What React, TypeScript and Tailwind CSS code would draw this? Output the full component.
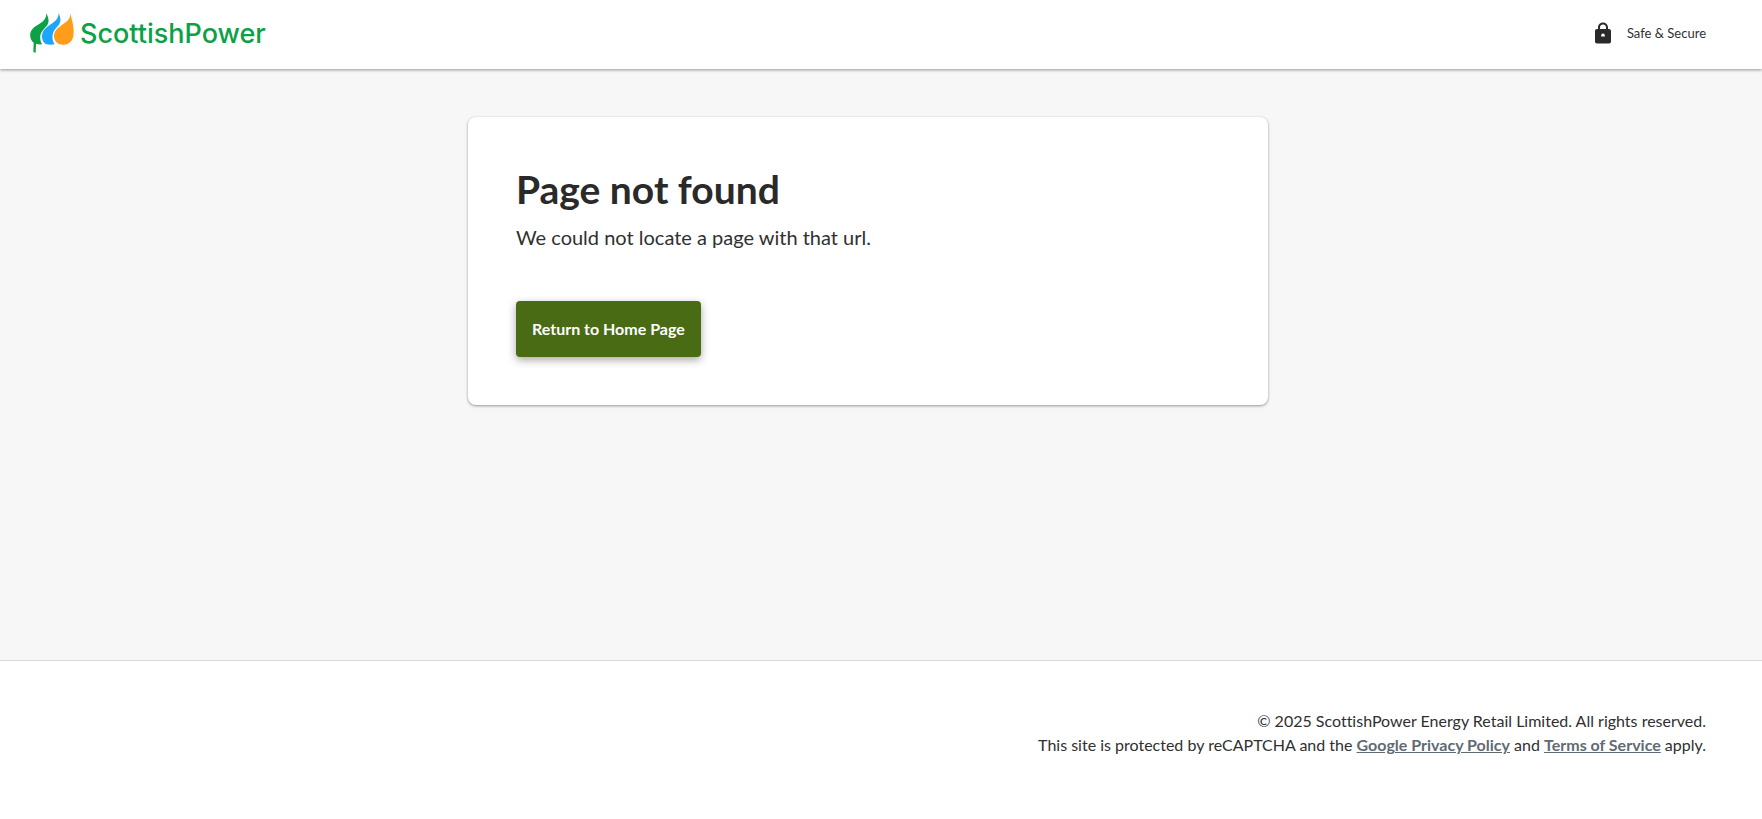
const homeUrl = '#';
const privacyUrl = 'https://policies.google.com/privacy';
const termsUrl = 'https://policies.google.com/terms';

function Logo() {
  return (
    <a href={homeUrl} className="flex items-center gap-1.5">
      <svg className="h-10 w-11" viewBox="30 40 132 120" aria-hidden="true">
        {/* Green leaf with its stem */}
        <path
          fill="#0ca047"
          d="M79 41C86 56 90 68 78 81C66 93 57 105 62 124C63 129 65 132 67 134C60 135 53 134 48 132L47 159L40 157L41 129C33 123 29 113 31 101C35 84 50 78 62 70C74 62 79 54 79 41Z"
        />
        {/* Blue drop */}
        <path
          fill="#1ba5fb"
          d="M116 41C123 56 124 68 113 80C102 91 94 105 99 124C101 129 103 132 104 134C96 136 87 136 80 134C69 130 64 116 67 102C71 87 84 80 97 71C110 62 116 53 116 41Z"
        />
        {/* Orange drop */}
        <path
          fill="#ff9c1a"
          d="M151 41C154 57 161 73 161 94C162 117 153 135 131 135C112 136 100 121 102 105C105 88 119 82 130 73C144 64 151 55 151 41Z"
        />
      </svg>
      <span className="pt-0.5 font-['Inter',sans-serif] text-[27px] leading-10 font-medium text-[#0ca047]">
        ScottishPower
      </span>
    </a>
  );
}

function LockIcon() {
  return (
    <svg className="h-6 w-6" viewBox="0 0 24 24" fill="#2a2a2a" aria-hidden="true">
      <path
        fillRule="evenodd"
        d="M18 8h-1V6.500C17 3.700 14.800 1.500 12 1.500S7 3.700 7 6.500V8H6c-1.100 0-2 .9-2 2v10.500c0 1.100.9 2 2 2h12c1.100 0 2-.9 2-2V10c0-1.100-.9-2-2-2zM9 8V6.500c0-1.700 1.300-3 3-3s3 1.300 3 3V8H9zm1.200 7.500v-1.300a1.800 1.800 0 0 1 3.600 0v1.300z"
      />
    </svg>
  );
}

function Header() {
  return (
    <header className="relative flex h-[69px] items-center justify-between bg-white pr-14 pb-1 pl-[30px] shadow-[0_1px_3px_rgba(0,0,0,0.4)]">
      <Logo />
      <div className="flex items-center gap-3">
        <LockIcon />
        <span className="text-[13px] leading-5">Safe &amp; Secure</span>
      </div>
    </header>
  );
}

function NotFoundCard() {
  return (
    <section className="w-full max-w-[800px] rounded-lg bg-white p-12 shadow-[0_1px_3px_rgba(0,0,0,0.4)]">
      <h1 className="text-[39px] leading-12 font-bold text-[#2a2a2a]">Page not found</h1>
      <p className="mt-2 text-xl leading-8">We could not locate a page with that url.</p>
      <button
        type="button"
        className="mt-12 h-14 rounded bg-[#486b14] px-4 text-base font-bold text-white shadow-[0_3px_8px_rgba(0,0,0,0.35)]"
      >
        Return to Home Page
      </button>
    </section>
  );
}

function Footer() {
  const linkClass = 'font-bold text-[#5f6b74] underline';

  return (
    <footer className="border-t border-[#d9d9d9] bg-white pt-12 pr-14 pb-[62px] pl-[30px] text-right text-base leading-6">
      <p>© 2025 ScottishPower Energy Retail Limited. All rights reserved.</p>
      <p>
        This site is protected by reCAPTCHA and the{' '}
        <a href={privacyUrl} className={linkClass}>
          Google Privacy Policy
        </a>{' '}
        and{' '}
        <a href={termsUrl} className={linkClass}>
          Terms of Service
        </a>{' '}
        apply.
      </p>
    </footer>
  );
}

export default function App() {
  return (
    <div className="flex min-h-screen flex-col bg-[#f7f7f7] font-['Lato',sans-serif] text-[#303030] [font-variant-ligatures:none]">
      <Header />
      <main className="flex flex-1 items-start justify-center py-12 pr-14 pl-[30px]">
        <NotFoundCard />
      </main>
      <Footer />
    </div>
  );
}
